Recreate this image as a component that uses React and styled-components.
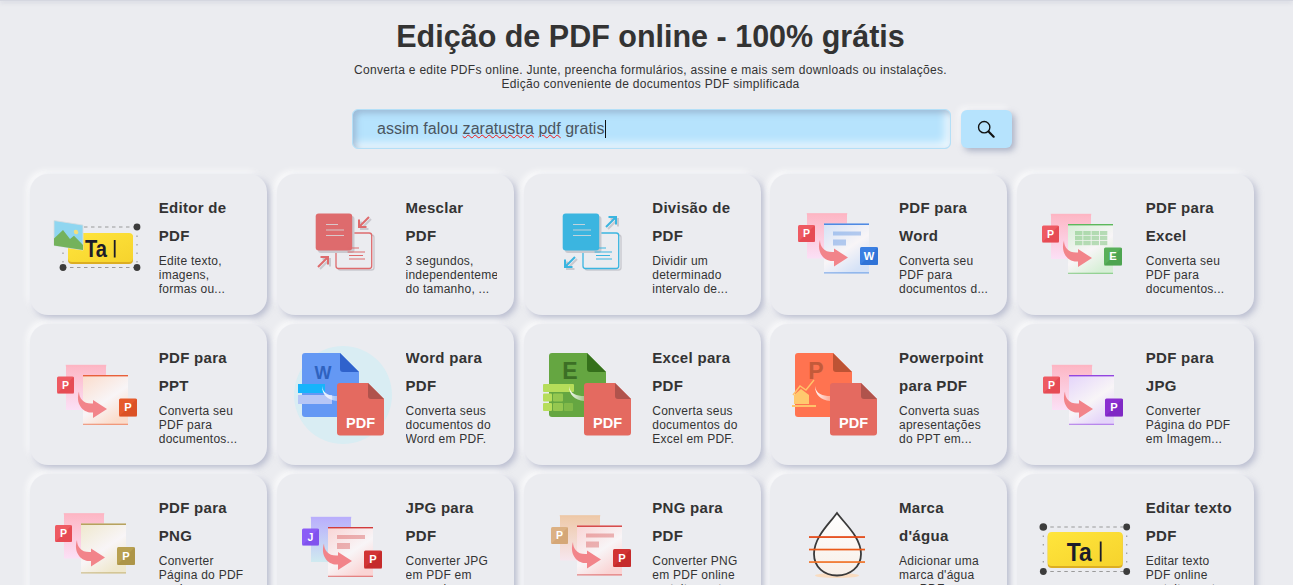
import React from 'react';
import styled, {createGlobalStyle} from 'styled-components';

const GlobalStyle = createGlobalStyle`
  html, body {
    margin: 0;
    height: 100%;
    overflow: hidden;
    background: #ebecf0;
    font-family: "Liberation Sans", Arial, sans-serif;
    color: #333;
  }
`;

const TopShadow = styled.div`
  height: 1px;
  background: #d5d7e0;
  box-shadow: 0 1px 4px rgba(150, 155, 180, 0.7);
`;

const Header = styled.header`
  display: flex;
  flex-direction: column;
  align-items: center;
  padding: 17px 0 0 8px;
`;

const Title = styled.h1`
  margin: 0;
  font-size: 30.5px;
  line-height: 37px;
  font-weight: 700;
  color: #333;
`;

const Subtitle = styled.p`
  margin: 8px 0 0;
  font-size: 12px;
  line-height: 14px;
  letter-spacing: 0.3px;
  text-align: center;
  color: #333;
`;

const SearchRow = styled.div`
  display: flex;
  gap: 10px;
  margin: 18px 0 0 62px;
`;

const SearchInput = styled.div`
  box-sizing: border-box;
  width: 599px;
  height: 40px;
  padding: 0 0 0 24.5px;
  display: flex;
  align-items: center;
  border: 1px solid #b4dff7;
  border-radius: 6px;
  background: #b6e3fd;
  box-shadow: inset 3px 3px 6px rgba(130, 150, 180, 0.55), inset -5px -5px 8px rgba(255, 255, 255, 0.75);
  font-size: 16px;
  letter-spacing: 0.02px;
  color: #4b5560;
  white-space: pre;
`;

const Misspelled = styled.span`
  text-decoration: underline wavy #f01818 1px;
  text-underline-offset: 0;
`;

const Caret = styled.span`
  display: inline-block;
  width: 1px;
  height: 18px;
  margin-left: 1px;
  vertical-align: -4px;
  background: #111;
`;

const SearchButton = styled.button`
  width: 51px;
  height: 38px;
  margin-top: 1px;
  padding: 0;
  display: flex;
  align-items: center;
  justify-content: center;
  border: 0;
  border-radius: 6px;
  background: #b6e3fd;
  box-shadow: 3px 3px 6px rgba(130, 140, 170, 0.6), -3px -3px 6px rgba(255, 255, 255, 0.7);
`;

const Grid = styled.main`
  display: grid;
  grid-template-columns: repeat(5, 237px);
  column-gap: 9.75px;
  row-gap: 9px;
  margin: 25px 0 0 30px;
`;

const Card = styled.article`
  box-sizing: border-box;
  height: 141px;
  padding: 0 0 0 16px;
  display: flex;
  align-items: center;
  gap: 12.75px;
  border-radius: 18px;
  background: #ebecf0;
  box-shadow: 3px 3px 6px rgba(160, 165, 190, 0.65), -3px -3px 6px rgba(255, 255, 255, 0.85);
`;

const IconBox = styled.svg`
  width: 100px;
  height: 100px;
  flex: none;
`;

const CardText = styled.div`
  width: 91px;
  overflow: hidden;
`;

const CardTitle = styled.h3`
  margin: 0 0 4px;
  font-size: 15px;
  line-height: 28px;
  font-weight: 700;
  letter-spacing: 0.3px;
  color: #333;
`;

const CardDesc = styled.p`
  margin: 0;
  font-size: 12px;
  line-height: 14px;
  letter-spacing: 0.25px;
  color: #333;
`;

const SearchIcon = () => (
  <svg width="18" height="18" viewBox="0 0 20 20" fill="none" stroke="#111">
    <circle cx="8" cy="8" r="6.3" strokeWidth="1.5"/>
    <path d="M12.8 12.8 L18.5 18.5" strokeWidth="2.4" strokeLinecap="round"/>
  </svg>
);

const TaIcon = ({name, photo}) => {
  const box = photo
    ? {x: 22, y: 38, w: 65, h: 30, l: 17, r: 91, t: 32, b: 72.5, fs: 23, tw: 22, tx: 39, ty: 62, cx: 68.7, c1: 45, c2: 62.5}
    : {x: 14.7, y: 37, w: 75, h: 35, l: 10.3, r: 93.7, t: 32, b: 76.5, fs: 26, tw: 25, tx: 33.7, ty: 65.5, cx: 67.7, c1: 46.5, c2: 66.5};
  return (
    <IconBox viewBox="0 0 100 100">
      <defs>
        <linearGradient id={name} x1="0" y1="0" x2="1" y2="1">
          <stop offset="0" stopColor="#ffe53c"/>
          <stop offset="1" stopColor="#f6d32d"/>
        </linearGradient>
      </defs>
      <g stroke="#9a9a9a" strokeWidth="1.2" strokeDasharray="3.5 3.5" fill="none">
        <path d={`M${box.l} ${box.t} H${box.r}`}/>
        <path d={`M${box.l} ${box.b} H${box.r}`}/>
        <path d={`M${box.l} ${box.t} V${box.b}`} strokeDasharray="1.5 7"/>
        <path d={`M${box.r} ${box.t} V${box.b}`} strokeDasharray="1.5 7"/>
      </g>
      <rect x={box.x} y={box.y + 1} width={box.w} height={box.h} rx="4" fill="#dcae22"/>
      <rect x={box.x} y={box.y} width={box.w} height={box.h - 1} rx="4" fill={`url(#${name})`}/>
      <text x={box.tx} y={box.ty} fontSize={box.fs} fontWeight="700" fill="#1c1c2a" textLength={box.tw} lengthAdjust="spacingAndGlyphs">Ta</text>
      <rect x={box.cx - 0.9} y={box.c1} width="1.8" height={box.c2 - box.c1} fill="#1c1c2a"/>
      {!photo && <circle cx={box.l} cy={box.t} r="3.8" fill="#3c3c3c"/>}
      <circle cx={box.r} cy={box.t} r="3.4" fill="#3c3c3c"/>
      <circle cx={box.l} cy={box.b} r="3.4" fill="#3c3c3c"/>
      <circle cx={box.r} cy={box.b} r="3.4" fill="#3c3c3c"/>
      {photo && (
        <g transform="translate(8 25.5) skewY(9)">
          <rect width="29" height="25" fill="#8fd6f0" stroke="#d9dde0" strokeWidth="0.8"/>
          <circle cx="22" cy="8" r="2.2" fill="#f3df7c"/>
          <path d="M0 25 V18 L9 8 L16 16 L20 12 L29 20 V25 Z" fill="#74b25c"/>
        </g>
      )}
    </IconBox>
  );
};

// merge arrows point inwards, split arrows point outwards
const CornerArrow = ({from, to, color}) => {
  const dx = Math.sign(to[0] - from[0]);
  const dy = Math.sign(to[1] - from[1]);
  const d = `M${from[0]} ${from[1]} L${to[0]} ${to[1]} M${to[0] - dx * 7.5} ${to[1]} H${to[0]} V${to[1] - dy * 7.5}`;
  return (
    <>
      <path d={d} transform="translate(2 2)" stroke="#c9c9cf" strokeWidth="2" fill="none"/>
      <path d={d} stroke={color} strokeWidth="2" fill="none"/>
    </>
  );
};

const SheetsIcon = ({color, split}) => (
  <IconBox viewBox="0 0 100 100">
    <rect x="45" y="40" width="36" height="35" rx="2.5" fill="none" stroke="#c9c9cf" strokeWidth="1.4"/>
    <rect x="43" y="38" width="35.7" height="35.5" rx="2.5" fill="#ebecf0" stroke={color} strokeWidth="1.3"/>
    <rect x="25" y="21" width="36.5" height="37" rx="3" fill="#c9c9cf"/>
    <rect x="22.7" y="18.5" width="36.5" height="37" rx="3" fill={color}/>
    <path d="M33 29.5 H45 M33 35 H51 M33 40.5 H51" stroke="#d8d8da" strokeWidth="1.2" fill="none" opacity="0.85"/>
    <path d="M54.6 53 H66 M54.6 57 H72 M56 60.5 H70 M56 64 H72" stroke={color} strokeWidth="1" fill="none"/>
    {split ? (
      <>
        <CornerArrow from={[66, 32]} to={[76, 22]} color={color}/>
        <CornerArrow from={[35, 62]} to={[25, 72]} color={color}/>
      </>
    ) : (
      <>
        <CornerArrow from={[76, 22]} to={[66, 32]} color={color}/>
        <CornerArrow from={[25, 72]} to={[35, 62]} color={color}/>
      </>
    )}
  </IconBox>
);

const Badge = ({x, y, size, color, dark, letter}) => (
  <g>
    <rect x={x} y={y} width={size} height={size} rx="1.5" fill={color}/>
    <path d={`M${x} ${y + size} L${x + size} ${y} V${y + size} Z`} fill={dark} opacity="0.35"/>
    <text x={x + size / 2} y={y + size * 0.72} fontSize={size * 0.62} fontWeight="700" fill="#fff" textAnchor="middle">{letter}</text>
  </g>
);

const TargetLines = ({color}) => (
  <g fill={color} opacity="0.35">
    <rect x="47" y="36.5" width="28" height="4"/>
    <rect x="47" y="44.5" width="13" height="6"/>
  </g>
);

const TargetCells = ({color}) => (
  <g fill={color} opacity="0.4">
    {[0, 1, 2].map(r => [0, 1, 2, 3].map(c => (
      <rect key={`${r}-${c}`} x={45 + c * 8.3} y={35.5 + r * 5} width="7.4" height="4.2"/>
    )))}
  </g>
);

const ConvertIcon = ({name, dx = 0, dy = 0, src, srcLow, srcBadge, srcDark, srcLetter = 'P', tint, band, badge, badgeDark, letter, content}) => (
  <IconBox viewBox="0 0 100 100">
    <defs>
      <linearGradient id={`${name}-src`} x1="0" y1="0" x2="0" y2="1">
        <stop offset="0" stopColor={src}/>
        <stop offset="1" stopColor={srcLow}/>
      </linearGradient>
      <linearGradient id={`${name}-dst`} x1="0" y1="0" x2="0.6" y2="1">
        <stop offset="0" stopColor={tint}/>
        <stop offset="0.6" stopColor="#f8f5f7"/>
        <stop offset="1" stopColor={tint}/>
      </linearGradient>
    </defs>
    <g transform={`translate(${dx} ${dy})`}>
      <path d="M21 18.5 H61 V63.5 H21 Z" fill={`url(#${name}-src)`}/>
      <rect x="21" y="18.5" width="40" height="1.2" fill={src} stroke={src} strokeWidth="0.4"/>
      <Badge x={12} y={30} size={17} color={srcBadge} dark={srcDark} letter={srcLetter}/>
      <rect x="38" y="28.5" width="45" height="50" fill={`url(#${name}-dst)`}/>
      <rect x="38" y="28.5" width="45" height="1.4" fill={band}/>
      <rect x="38" y="77.2" width="45" height="1.3" fill={band} opacity="0.55"/>
      {content === 'lines' && <TargetLines color={band}/>}
      {content === 'cells' && <TargetCells color={band}/>}
      <path d="M34 45 C34 52 39 58 48 57 L48 53.5 L62 62.5 L48 71.5 L48 66 C38 67 30 57 34 45 Z" fill="#f2848a"/>
      <Badge x={74} y={52} size={18} color={badge} dark={badgeDark} letter={letter}/>
    </g>
  </IconBox>
);

const PdfDoc = () => (
  <g>
    <path d="M47 38 H75 L91 54 V87.5 A3 3 0 0 1 88 90.5 H47 A3 3 0 0 1 44 87.5 V41 A3 3 0 0 1 47 38 Z" fill="#e46a60"/>
    <path d="M75 38 L91 54 H78 A3 3 0 0 1 75 51 Z" fill="#b0534c"/>
    <text x="67.5" y="82.8" fontSize="14.5" fontWeight="700" fill="#fff" textAnchor="middle">PDF</text>
  </g>
);

const ToPdfIcon = ({name, page, fold, letter, letterColor, letterSize = 23, circle, children}) => (
  <IconBox viewBox="0 0 100 100">
    <defs>
      <linearGradient id={name} x1="0" y1="0" x2="1" y2="0">
        <stop offset="0" stopColor="#fff" stopOpacity="0.95"/>
        <stop offset="1" stopColor="#fff" stopOpacity="0.1"/>
      </linearGradient>
    </defs>
    {circle && <circle cx="50" cy="50" r="49" fill="#d9edf3"/>}
    <path d="M12 8 H47 L66 27 V69 A3 3 0 0 1 63 72 H12 A3 3 0 0 1 9 69 V11 A3 3 0 0 1 12 8 Z" fill={page}/>
    <path d="M47 8 L66 27 H50 A3 3 0 0 1 47 24 Z" fill={fold}/>
    <text x="30" y="33.5" fontSize={letterSize} fontWeight="700" fill={letterColor} textAnchor="middle">{letter}</text>
    {children}
    <path d="M29 41 C30 49 37 51 44 51 L44 47 L52 54 L44 60 L44 56 C35 55 29 50 29 41 Z" fill={`url(#${name})`}/>
    <PdfDoc/>
  </IconBox>
);

const DropIcon = () => (
  <IconBox viewBox="0 0 100 100">
    <defs>
      <linearGradient id="drop-fill" x1="0" y1="0" x2="0" y2="1">
        <stop offset="0" stopColor="#ffffff"/>
        <stop offset="1" stopColor="#f7efe8"/>
      </linearGradient>
    </defs>
    <ellipse cx="51" cy="80.5" rx="22" ry="2.6" fill="#f9dcc0"/>
    <path d="M51 18 C44 28 28 42 28 59 C28 72 38 80.5 51 80.5 C64 80.5 75 72 75 59 C75 42 58 28 51 18 Z" fill="url(#drop-fill)" stroke="#3a3a3a" strokeWidth="1.8"/>
    <rect x="23" y="41.2" width="56" height="1.7" fill="#e4420e"/>
    <rect x="23" y="53.7" width="56" height="1.7" fill="#ea5a18"/>
    <rect x="23" y="66.2" width="56" height="1.7" fill="#f07428"/>
  </IconBox>
);

const pinkSource = {src: '#fdb6c4', srcLow: '#fbe0f6', srcBadge: '#ee5a62', srcDark: '#d8323c'};

const cards = [
  {title: 'Editor de PDF', desc: 'Edite texto, imagens, formas ou...', icon: <TaIcon name="ta-photo" photo/>},
  {title: 'Mesclar PDF', desc: '3 segundos, independentemente do tamanho, ...', icon: <SheetsIcon color="#de6b6d"/>},
  {title: 'Divisão de PDF', desc: 'Dividir um determinado intervalo de...', icon: <SheetsIcon color="#3bb5e0" split/>},
  {title: 'PDF para Word', desc: 'Converta seu PDF para documentos d...', icon: <ConvertIcon name="to-word" {...pinkSource} tint="#d5e2f7" band="#3d7fe0" badge="#3a7fe2" badgeDark="#1f5fc4" letter="W" content="lines"/>},
  {title: 'PDF para Excel', desc: 'Converta seu PDF para documentos...', icon: <ConvertIcon name="to-excel" dx={-3} dy={0.5} {...pinkSource} tint="#d6efd6" band="#5cb85c" badge="#58b05a" badgeDark="#3a8f3e" letter="E" content="cells"/>},
  {title: 'PDF para PPT', desc: 'Converta seu PDF para documentos...', icon: <ConvertIcon name="to-ppt" dx={-1} dy={1.5} {...pinkSource} tint="#fbdccb" band="#e8603a" badge="#e55a2b" badgeDark="#c8431a" letter="P"/>},
  {title: 'Word para PDF', desc: 'Converta seus documentos do Word em PDF.', icon: (
    <ToPdfIcon name="word-arrow" circle page="#6498f4" fold="#2f62cc" letter="W" letterColor="#2f62bf" letterSize={18}>
      <rect x="5" y="39" width="27" height="9" fill="#17b4fb"/>
      <rect x="5" y="50" width="34" height="9" fill="#b6c6f6"/>
    </ToPdfIcon>
  )},
  {title: 'Excel para PDF', desc: 'Converta seus documentos do Excel em PDF.', icon: (
    <ToPdfIcon name="excel-arrow" page="#65a641" fold="#35701b" letter="E" letterColor="#3c6f25">
      <g fill="#b6dd5a">
        <rect x="3" y="39" width="31" height="8" rx="1"/>
        <rect x="3" y="48.5" width="9" height="8" rx="1"/>
        <rect x="13" y="48.5" width="10" height="8" rx="1" opacity="0.6"/>
        <rect x="3" y="58" width="9" height="8" rx="1"/>
        <rect x="13" y="58" width="10" height="8" rx="1" opacity="0.6"/>
        <rect x="24" y="58" width="9" height="8" rx="1" opacity="0.35"/>
      </g>
    </ToPdfIcon>
  )},
  {title: 'Powerpoint para PDF', desc: 'Converta suas apresentações do PPT em...', icon: (
    <ToPdfIcon name="ppt-arrow" page="#ff7350" fold="#bd5334" letter="P" letterColor="#c45a3a">
      <path d="M7 50 L14 41 L20 45 L28 35" stroke="#ffc36b" strokeWidth="1.4" fill="none"/>
      <path d="M8 59 V50 L15 44 L23 50 V59 Z" fill="#ffc96e"/>
      <rect x="6" y="60" width="24" height="2" fill="#ffc36b"/>
    </ToPdfIcon>
  )},
  {title: 'PDF para JPG', desc: 'Converter Página do PDF em Imagem...', icon: <ConvertIcon name="to-jpg" dx={-2} dy={1.5} {...pinkSource} tint="#e4d4fa" band="#9246e0" badge="#8a2fd0" badgeDark="#6a1fb0" letter="P"/>},
  {title: 'PDF para PNG', desc: 'Converter Página do PDF em Imagem...', icon: <ConvertIcon name="to-png" dx={-3} dy={0} {...pinkSource} tint="#efe8cd" band="#b09a50" badge="#b8a050" badgeDark="#98803a" letter="P"/>},
  {title: 'JPG para PDF', desc: 'Converter JPG em PDF em segundos...', icon: <ConvertIcon name="jpg-pdf" dx={-3} dy={3.5} src="#b9aefc" srcLow="#cfeaf0" srcBadge="#8b5cf6" srcDark="#6d3fe0" srcLetter="J" tint="#fad4d4" band="#d23c3c" badge="#d23434" badgeDark="#b01e1e" letter="P" content="lines"/>},
  {title: 'PNG para PDF', desc: 'Converter PNG em PDF online gratuitamente', icon: <ConvertIcon name="png-pdf" dx={-1} dy={2} src="#eec9a8" srcLow="#f6e6ee" srcBadge="#dcb184" srcDark="#c8965f" tint="#fad4d4" band="#d23c3c" badge="#d23434" badgeDark="#b01e1e" letter="P" content="lines"/>},
  {title: "Marca d'água", desc: "Adicionar uma marca d'água em PDF", icon: <DropIcon/>},
  {title: 'Editar texto PDF', desc: 'Editar texto PDF online gratuitamente', icon: <TaIcon name="ta-plain"/>},
];

const App = () => {
  return (
    <>
      <GlobalStyle/>
      <TopShadow/>
      <Header>
        <Title>Edição de PDF online - 100% grátis</Title>
        <Subtitle>
          Converta e edite PDFs online. Junte, preencha formulários, assine e mais sem downloads ou instalações.<br/>
          Edição conveniente de documentos PDF simplificada
        </Subtitle>
        <SearchRow>
          <SearchInput role="textbox">
            <span>assim falou <Misspelled>zaratustra</Misspelled> <Misspelled>pdf</Misspelled> gratis<Caret/></span>
          </SearchInput>
          <SearchButton aria-label="Buscar"><SearchIcon/></SearchButton>
        </SearchRow>
      </Header>
      <Grid>
        {cards.map(card => (
          <Card key={card.title}>
            {card.icon}
            <CardText>
              <CardTitle>{card.title}</CardTitle>
              <CardDesc>{card.desc}</CardDesc>
            </CardText>
          </Card>
        ))}
      </Grid>
    </>
  );
};

export default App;
